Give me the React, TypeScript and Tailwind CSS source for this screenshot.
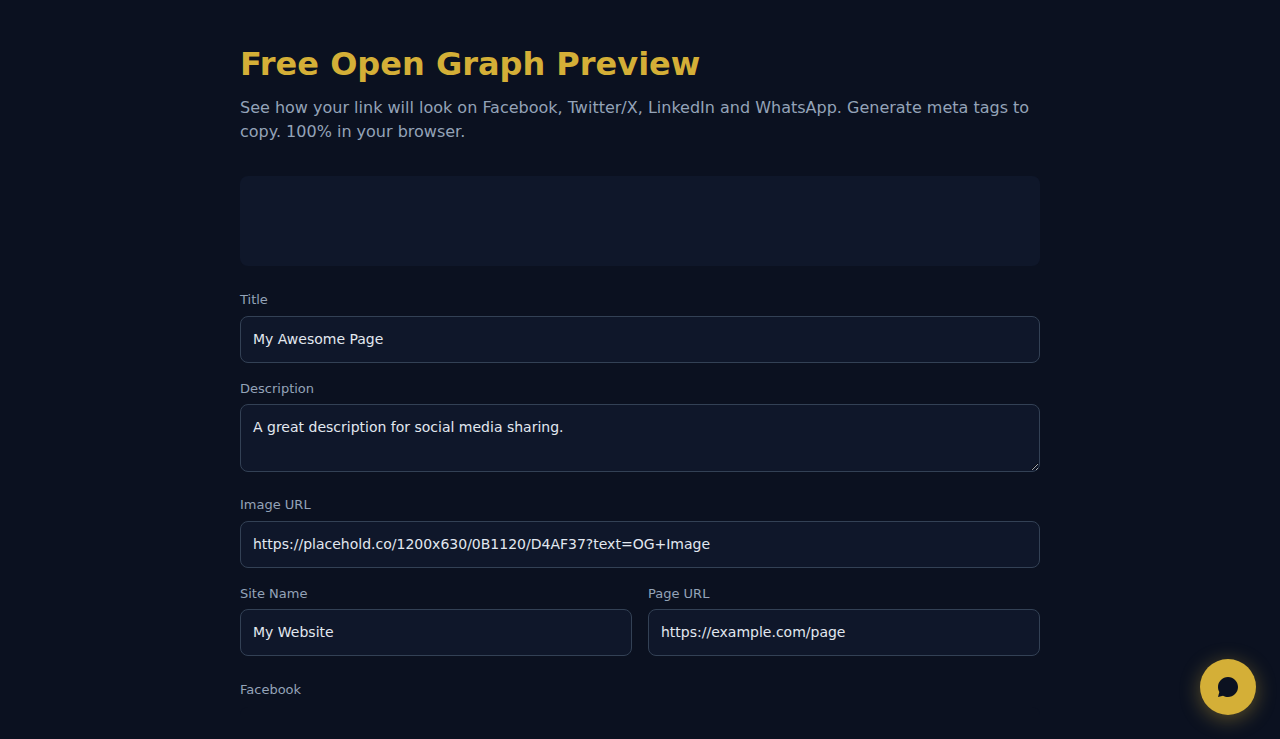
import { useState } from "react";

const labelClass = "block text-[13px] leading-[19.5px] text-[#94a3b8]";
const inputClass =
  "block w-full rounded-lg border border-[#334155] bg-[#0f172a] p-3 text-sm leading-[21px] text-[#e2e8f0] outline-none";

type FieldProps = {
  label: string;
  value: string;
  onChange: (value: string) => void;
  labelGap?: string;
};

const Field = ({ label, value, onChange, labelGap = "mb-1.5" }: FieldProps) => (
  <label className="block">
    <span className={`${labelClass} ${labelGap}`}>{label}</span>
    <input className={`${inputClass} h-[47px]`} value={value} onChange={(e) => onChange(e.target.value)} />
  </label>
);

const App = () => {
  const [title, setTitle] = useState("My Awesome Page");
  const [description, setDescription] = useState("A great description for social media sharing.");
  const [image, setImage] = useState("https://placehold.co/1200x630/0B1120/D4AF37?text=OG+Image");
  const [siteName, setSiteName] = useState("My Website");
  const [url, setUrl] = useState("https://example.com/page");

  return (
    <div className="h-screen overflow-hidden bg-[#0b1120] font-['DejaVu_Sans',sans-serif]">
      <main className="mx-auto w-[800px] pt-10">
        <h1 className="mb-2 text-[32px] leading-[48px] font-bold text-[#d4af37]">Free Open Graph Preview</h1>
        <p className="mb-8 text-base leading-6 text-[#94a3b8]">
          See how your link will look on Facebook, Twitter/X, LinkedIn and WhatsApp. Generate meta tags to copy. 100% in
          your browser.
        </p>

        <div className="mb-6 h-[90px] rounded-lg bg-[#0f172a]" />

        <div className="flex flex-col">
          <Field label="Title" value={title} onChange={setTitle} />
          <label className="mt-4 block">
            <span className={`${labelClass} mb-1.5`}>Description</span>
            <textarea
              className={`${inputClass} h-[68px] resize-y`}
              value={description}
              onChange={(e) => setDescription(e.target.value)}
            />
          </label>
          <div className="mt-[23px]">
            <Field label="Image URL" value={image} onChange={setImage} />
          </div>
          <div className="mt-4 grid grid-cols-2 gap-4">
            <Field label="Site Name" value={siteName} onChange={setSiteName} labelGap="mb-[5.7px]" />
            <Field label="Page URL" value={url} onChange={setUrl} labelGap="mb-[5.7px]" />
          </div>
        </div>

        <p className={`${labelClass} mt-6 mb-2`}>Facebook</p>
        <div className="overflow-hidden rounded-lg bg-[#1e293b]">
          <div className="h-[420px] bg-[#0b1120]" />
        </div>
      </main>

      <button
        aria-label="Open chat"
        className="fixed right-6 bottom-6 flex size-14 items-center justify-center rounded-full bg-[#d4af37] text-[#0b1120] shadow-[0_4px_20px_rgba(212,175,55,0.4)]"
      >
        <svg className="size-6" viewBox="0 0 24 24" fill="currentColor">
          <path d="M12 2C6.48 2 2 6.48 2 12c0 1.82.49 3.53 1.34 5L2 22l5-1.34C8.47 21.51 10.18 22 12 22c5.52 0 10-4.48 10-10S17.52 2 12 2z" />
        </svg>
      </button>
    </div>
  );
};

export default App;
